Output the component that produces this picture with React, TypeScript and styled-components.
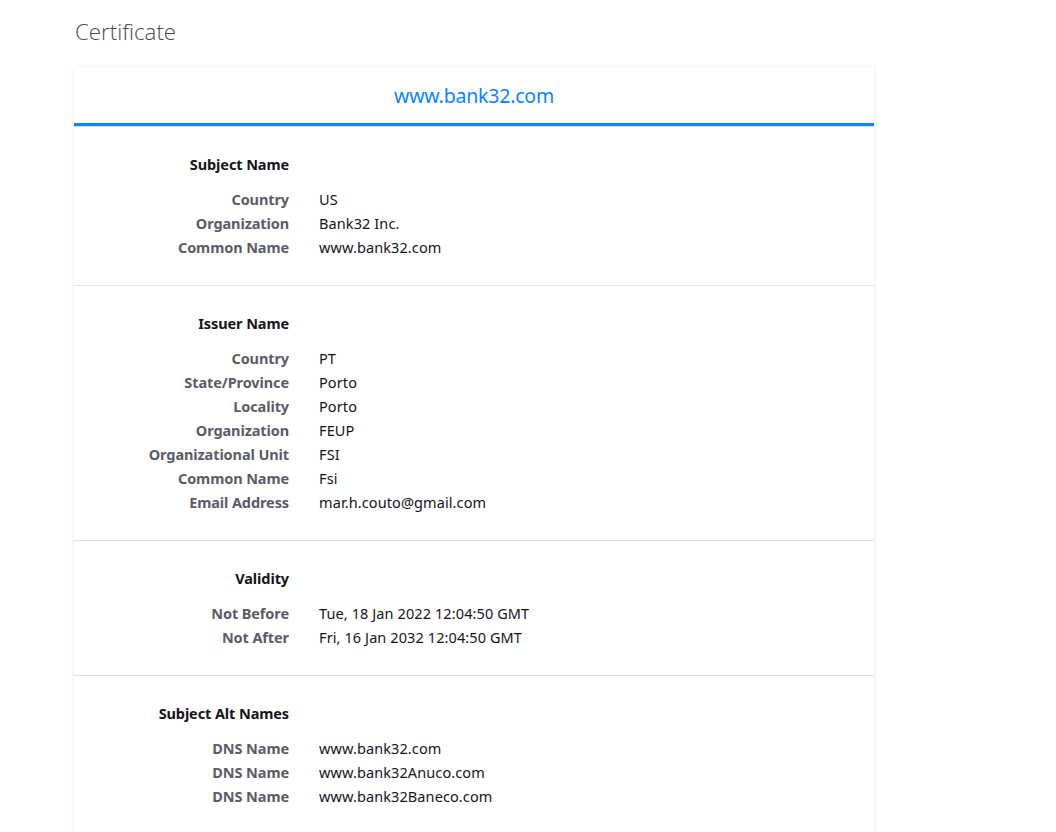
import React from 'react';
import styled, { createGlobalStyle } from 'styled-components';

const GlobalStyle = createGlobalStyle`
  html, body {
    margin: 0;
    padding: 0;
    background: #ffffff;
  }
  body {
    font-family: "Noto Sans", "Open Sans", sans-serif;
    color: #15141a;
  }
`;

const Page = styled.div`
  padding: 14px 0 0 74px;
  width: 800px;
`;

const PageTitle = styled.h1`
  margin: 0 0 17px 1px;
  font-family: "Open Sans", "Noto Sans", sans-serif;
  font-weight: 300;
  font-size: 22.3px;
  line-height: 36px;
  color: #4a4a55;
`;

const Card = styled.div`
  background: #fff;
  box-shadow: 0 1px 4px rgba(12, 12, 13, 0.1);
  border-radius: 2px;
`;

const CardHeader = styled.div`
  height: 56px;
  display: flex;
  align-items: center;
  justify-content: center;
  border-bottom: 3px solid #0a84ff;
  box-shadow: 0 1px 0 #d7d7db;
`;

const HostTitle = styled.span`
  font-size: 19.5px;
  color: #0a84ff;
  letter-spacing: -0.2px;
`;

const Section = styled.section<{ first?: boolean }>`
  padding: ${({ first }) => (first ? '26px' : '25px')} 0 26px;
  border-top: ${({ first }) => (first ? 'none' : '1px solid #e0e0e2')};
  display: grid;
  grid-template-columns: 215px 1fr;
  column-gap: 30px;
  font-size: 14.5px;
  line-height: 24px;
`;

const SectionTitle = styled.div`
  grid-column: 1;
  text-align: right;
  font-weight: 700;
  letter-spacing: -0.1px;
  color: #15141a;
  margin-bottom: 11px;
`;

const Label = styled.div`
  grid-column: 1;
  text-align: right;
  font-weight: 700;
  letter-spacing: -0.1px;
  color: #5b5b66;
`;

const Value = styled.div`
  grid-column: 2;
  letter-spacing: 0.1px;
  color: #15141a;
`;

type Row = [string, string];

const sections: { title: string; rows: Row[] }[] = [
  {
    title: 'Subject Name',
    rows: [
      ['Country', 'US'],
      ['Organization', 'Bank32 Inc.'],
      ['Common Name', 'www.bank32.com'],
    ],
  },
  {
    title: 'Issuer Name',
    rows: [
      ['Country', 'PT'],
      ['State/Province', 'Porto'],
      ['Locality', 'Porto'],
      ['Organization', 'FEUP'],
      ['Organizational Unit', 'FSI'],
      ['Common Name', 'Fsi'],
      ['Email Address', 'mar.h.couto@gmail.com'],
    ],
  },
  {
    title: 'Validity',
    rows: [
      ['Not Before', 'Tue, 18 Jan 2022 12:04:50 GMT'],
      ['Not After', 'Fri, 16 Jan 2032 12:04:50 GMT'],
    ],
  },
  {
    title: 'Subject Alt Names',
    rows: [
      ['DNS Name', 'www.bank32.com'],
      ['DNS Name', 'www.bank32Anuco.com'],
      ['DNS Name', 'www.bank32Baneco.com'],
    ],
  },
];

export default function App() {
  return (
    <>
      <GlobalStyle />
      <Page>
        <PageTitle>Certificate</PageTitle>
        <Card>
          <CardHeader>
            <HostTitle>www.bank32.com</HostTitle>
          </CardHeader>
          {sections.map((section, i) => (
            <Section key={section.title} first={i === 0}>
              <SectionTitle>{section.title}</SectionTitle>
              <div />
              {section.rows.map(([label, value], j) => (
                <React.Fragment key={j}>
                  <Label>{label}</Label>
                  <Value>{value}</Value>
                </React.Fragment>
              ))}
            </Section>
          ))}
        </Card>
      </Page>
    </>
  );
}
